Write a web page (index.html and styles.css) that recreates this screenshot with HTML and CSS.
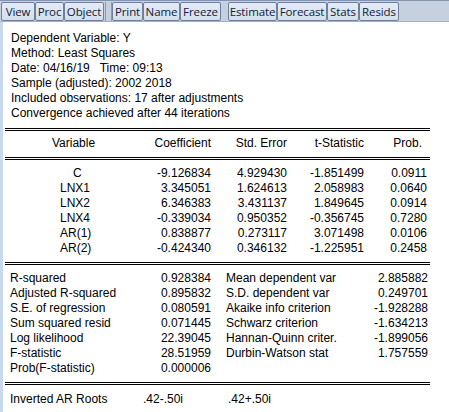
FILE: index.html
```html
<!DOCTYPE html>
<html>
<head>
<meta charset="utf-8">
<link rel="stylesheet" href="styles.css">
</head>
<body>
<div class="window">
  <div class="toolbar">
    <div class="group">
      <span class="btn w-view">View</span><span class="btn w-proc">Proc</span><span class="btn w-object">Object</span>
    </div>
    <span class="sep"></span>
    <div class="group">
      <span class="btn w-print">Print</span><span class="btn w-name">Name</span><span class="btn w-freeze">Freeze</span>
    </div>
    <span class="sep2"></span>
    <div class="group">
      <span class="btn w-estimate">Estimate</span><span class="btn w-forecast">Forecast</span><span class="btn w-stats">Stats</span><span class="btn w-resids">Resids</span>
    </div>
  </div>
  <div class="content">
    <div class="info">
      <div>Dependent Variable: Y</div>
      <div>Method: Least Squares</div>
      <div>Date: 04/16/19&nbsp;&nbsp;&nbsp;Time: 09:13</div>
      <div>Sample (adjusted): 2002 2018</div>
      <div>Included observations: 17 after adjustments</div>
      <div>Convergence achieved after 44 iterations</div>
    </div>
    <div class="report">
      <div class="dbl"></div>
      <div class="coef head">
        <span class="var-h">Variable</span>
        <span class="num">Coefficient</span>
        <span class="num">Std. Error</span>
        <span class="num">t-Statistic</span>
        <span class="num prob-h">Prob.</span>
      </div>
      <div class="dbl"></div>
      <div class="coef-body">
        <div class="coef"><span class="var var-c">C</span><span class="num">-9.126834</span><span class="num">4.929430</span><span class="num">-1.851499</span><span class="num">0.0911</span></div>
        <div class="coef"><span class="var">LNX1</span><span class="num">3.345051</span><span class="num">1.624613</span><span class="num">2.058983</span><span class="num">0.0640</span></div>
        <div class="coef"><span class="var">LNX2</span><span class="num">6.346383</span><span class="num">3.431137</span><span class="num">1.849645</span><span class="num">0.0914</span></div>
        <div class="coef"><span class="var">LNX4</span><span class="num">-0.339034</span><span class="num">0.950352</span><span class="num">-0.356745</span><span class="num">0.7280</span></div>
        <div class="coef"><span class="var">AR(1)</span><span class="num">0.838877</span><span class="num">0.273117</span><span class="num">3.071498</span><span class="num">0.0106</span></div>
        <div class="coef"><span class="var">AR(2)</span><span class="num">-0.424340</span><span class="num">0.346132</span><span class="num">-1.225951</span><span class="num">0.2458</span></div>
      </div>
      <div class="dbl"></div>
      <div class="stats">
        <span class="lbl">R-squared</span><span class="num">0.928384</span><span class="lbl2">Mean dependent var</span><span class="num">2.885882</span>
        <span class="lbl">Adjusted R-squared</span><span class="num">0.895832</span><span class="lbl2">S.D. dependent var</span><span class="num">0.249701</span>
        <span class="lbl">S.E. of regression</span><span class="num">0.080591</span><span class="lbl2">Akaike info criterion</span><span class="num">-1.928288</span>
        <span class="lbl">Sum squared resid</span><span class="num">0.071445</span><span class="lbl2">Schwarz criterion</span><span class="num">-1.634213</span>
        <span class="lbl">Log likelihood</span><span class="num">22.39045</span><span class="lbl2">Hannan-Quinn criter.</span><span class="num">-1.899056</span>
        <span class="lbl">F-statistic</span><span class="num">28.51959</span><span class="lbl2">Durbin-Watson stat</span><span class="num">1.757559</span>
        <span class="lbl">Prob(F-statistic)</span><span class="num">0.000006</span><span></span><span></span>
      </div>
      <div class="dbl"></div>
      <div class="roots">
        <span class="lbl">Inverted AR Roots</span><span>.42-.50i</span><span>.42+.50i</span>
      </div>
      <div class="single"></div>
    </div>
  </div>
</div>
</body>
</html>
```

FILE: styles.css
```css
html, body {
  margin: 0;
  padding: 0;
  background: #ffffff;
}

.window {
  width: 449px;
  height: 412px;
  overflow: hidden;
  display: flex;
  flex-direction: column;
}

.toolbar {
  height: 21px;
  flex: none;
  display: flex;
  align-items: stretch;
  background: #c6d1e0;
  border-top: 1px solid #8595ae;
  border-bottom: 1px solid #a2b1c7;
  box-sizing: border-box;
  height: 22px;
  padding: 1px 0 0 1px;
  font-family: "Open Sans", "Noto Sans", sans-serif;
  font-size: 11.5px;
  color: #10203a;
}

.group {
  display: flex;
  height: 19px;
}

.btn {
  display: flex;
  align-items: center;
  justify-content: center;
  box-sizing: border-box;
  border: 1px solid #6f809c;
  border-radius: 2px;
  background: linear-gradient(#e4ebf5, #d3deed);
  letter-spacing: -0.1px;
}

.w-view { width: 34px; }
.w-proc { width: 29px; }
.w-object { width: 40px; }
.w-print { width: 31px; }
.w-name { width: 37px; }
.w-freeze { width: 41px; }
.w-estimate { width: 49px; }
.w-forecast { width: 50px; }
.w-stats { width: 32px; }
.w-resids { width: 40px; }

.sep {
  width: 8px;
  flex: none;
  margin-right: 0;
  box-sizing: border-box;
  border-left: 1px solid #8c9bb3;
  border-right: 1px solid #8c9bb3;
  margin: 0 0 0 1px;
  width: 7px;
  margin-right: 0;
}

.sep2 {
  width: 7px;
  flex: none;
}

.content {
  flex: 1;
  border-left: 3px solid #c8d8ef;
  padding: 9px 0 0 2px;
  font-family: "Liberation Sans", Arial, sans-serif;
  font-size: 12px;
  line-height: 15px;
  color: #000;
}

.info {
  padding-left: 6px;
}

.report {
  width: 425px;
  margin-top: 7px;
}

.dbl {
  height: 1px;
  border-top: 1px solid #000;
  border-bottom: 1px solid #000;
}

.single {
  height: 0;
  border-top: 1px solid #000;
}

.coef {
  display: grid;
  grid-template-columns: 125px 81px 76px 77px 63px;
}

.head {
  padding: 5px 0 6px;
}

.coef-body {
  padding: 6px 0 6px;
}

.num {
  text-align: right;
  white-space: nowrap;
}

.var-h {
  padding-left: 47px;
}

.prob-h {
  padding-right: 5px;
}

.var {
  padding-left: 55px;
}

.var-c {
  padding-left: 68px;
}

.stats {
  display: grid;
  grid-template-columns: 135px 71px 119px 98px;
  padding: 6px 0 6px;
}

.lbl {
  padding-left: 5px;
  white-space: nowrap;
}

.lbl2 {
  padding-left: 15px;
  white-space: nowrap;
}

.roots {
  display: grid;
  grid-template-columns: 138px 85px 1fr;
  padding: 7px 0 5px;
}
```
